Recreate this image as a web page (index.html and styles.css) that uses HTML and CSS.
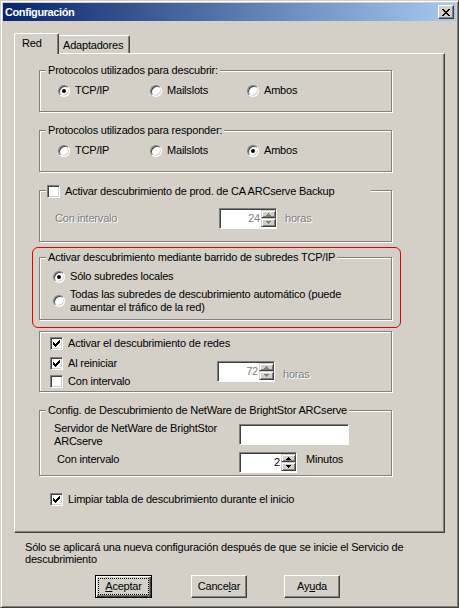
FILE: index.html
```html
<!DOCTYPE html>
<html lang="es">
<head>
    <meta charset="UTF-8">
    <title>Configuración</title>
    <link rel="stylesheet" href="styles.css">
</head>
<body>
    <div class="window">
        <div class="titlebar">
            <span>Configuración</span>
            <div class="close">
                <svg width="8" height="7" viewBox="0 0 8 7" shape-rendering="crispEdges"><path d="M0 0h2v1h-2zM6 0h2v1h-2zM1 1h2v1h-2zM5 1h2v1h-2zM2 2h4v1h-4zM3 3h2v1h-2zM2 4h4v1h-4zM1 5h2v1h-2zM5 5h2v1h-2zM0 6h2v1h-2zM6 6h2v1h-2z"/></svg>
            </div>
        </div>

        <div class="content">
            <div class="tabs">
                <div class="tab active">Red</div>
                <div class="tab">Adaptadores</div>
            </div>

            <div class="panel">
                <!-- descubrir -->
                <div class="group g-radio">
                    <div class="group-title">Protocolos utilizados para descubrir:</div>
                    <div class="radios">
                        <div class="opt"><span class="radio on"></span>TCP/IP</div>
                        <div class="opt"><span class="radio"></span>Mailslots</div>
                        <div class="opt"><span class="radio"></span>Ambos</div>
                    </div>
                </div>

                <!-- responder -->
                <div class="group g-radio gap">
                    <div class="group-title">Protocolos utilizados para responder:</div>
                    <div class="radios">
                        <div class="opt"><span class="radio"></span>TCP/IP</div>
                        <div class="opt"><span class="radio"></span>Mailslots</div>
                        <div class="opt"><span class="radio on"></span>Ambos</div>
                    </div>
                </div>

                <!-- ARCserve Backup -->
                <div class="group g-backup gap">
                    <div class="group-title check-title">
                        <span class="check"></span>Activar descubrimiento de prod. de CA ARCserve Backup
                    </div>
                    <div class="row interval">
                        <span class="lbl dim">Con intervalo</span>
                        <div class="spin">
                            <span class="val dim-val">24</span>
                            <div class="spin-btns">
                                <div class="spin-btn"><svg class="arrow off" width="5" height="3" viewBox="0 0 5 3" shape-rendering="crispEdges"><path d="M2 0h1v1h1v1h1v1h-5v-1h1v-1h1z"/></svg></div>
                                <div class="spin-btn"><svg class="arrow off" width="5" height="3" viewBox="0 0 5 3" shape-rendering="crispEdges"><path d="M0 0h5v1h-1v1h-1v1h-1v-1h-1v-1h-1z"/></svg></div>
                            </div>
                        </div>
                        <span class="unit dim">horas</span>
                    </div>
                </div>

                <!-- barrido -->
                <div class="mark">
                    <div class="group g-sweep">
                        <div class="group-title">Activar descubrimiento mediante barrido de subredes TCP/IP</div>
                        <div class="opt-list">
                            <div class="opt"><span class="radio on"></span>Sólo subredes locales</div>
                            <div class="opt two-lines"><span class="radio"></span><span>Todas las subredes de descubrimiento automático (puede<br>aumentar el tráfico de la red)</span></div>
                        </div>
                    </div>
                </div>

                <!-- redes -->
                <div class="group g-net">
                    <div class="check-row"><span class="check on"><svg width="7" height="7" viewBox="0 0 7 7" shape-rendering="crispEdges"><path d="M6 0h1v1h-1zM5 1h2v1h-2zM0 2h1v1h-1zM4 2h3v1h-3zM0 3h2v1h-2zM3 3h3v1h-3zM0 4h5v1h-5zM1 5h3v1h-3zM2 6h1v1h-1z"/></svg></span>Activar el descubrimiento de redes</div>
                    <div class="split">
                        <div class="split-left">
                            <div class="check-row"><span class="check on"><svg width="7" height="7" viewBox="0 0 7 7" shape-rendering="crispEdges"><path d="M6 0h1v1h-1zM5 1h2v1h-2zM0 2h1v1h-1zM4 2h3v1h-3zM0 3h2v1h-2zM3 3h3v1h-3zM0 4h5v1h-5zM1 5h3v1h-3zM2 6h1v1h-1z"/></svg></span>Al reiniciar</div>
                            <div class="check-row"><span class="check"></span>Con intervalo</div>
                        </div>
                        <div class="spin net-spin">
                            <span class="val dim-val">72</span>
                            <div class="spin-btns">
                                <div class="spin-btn"><svg class="arrow off" width="5" height="3" viewBox="0 0 5 3" shape-rendering="crispEdges"><path d="M2 0h1v1h1v1h1v1h-5v-1h1v-1h1z"/></svg></div>
                                <div class="spin-btn"><svg class="arrow off" width="5" height="3" viewBox="0 0 5 3" shape-rendering="crispEdges"><path d="M0 0h5v1h-1v1h-1v1h-1v-1h-1v-1h-1z"/></svg></div>
                            </div>
                        </div>
                        <span class="unit net-unit dim">horas</span>
                    </div>
                </div>

                <!-- NetWare -->
                <div class="group g-netware gap">
                    <div class="group-title">Config. de Descubrimiento de NetWare de BrightStor ARCserve</div>
                    <div class="nw-row nw-server">
                        <span class="nw-lbl">Servidor de NetWare de BrightStor<br>ARCserve</span>
                        <div class="edit"></div>
                    </div>
                    <div class="nw-row nw-interval">
                        <span class="nw-lbl2">Con intervalo</span>
                        <div class="spin">
                            <span class="val">2</span>
                            <div class="spin-btns">
                                <div class="spin-btn"><svg class="arrow" width="5" height="3" viewBox="0 0 5 3" shape-rendering="crispEdges"><path d="M2 0h1v1h1v1h1v1h-5v-1h1v-1h1z"/></svg></div>
                                <div class="spin-btn"><svg class="arrow" width="5" height="3" viewBox="0 0 5 3" shape-rendering="crispEdges"><path d="M0 0h5v1h-1v1h-1v1h-1v-1h-1v-1h-1z"/></svg></div>
                            </div>
                        </div>
                        <span class="nw-unit">Minutos</span>
                    </div>
                </div>

                <div class="check-row clean"><span class="check on"><svg width="7" height="7" viewBox="0 0 7 7" shape-rendering="crispEdges"><path d="M6 0h1v1h-1zM5 1h2v1h-2zM0 2h1v1h-1zM4 2h3v1h-3zM0 3h2v1h-2zM3 3h3v1h-3zM0 4h5v1h-5zM1 5h3v1h-3zM2 6h1v1h-1z"/></svg></span>Limpiar tabla de descubrimiento durante el inicio</div>
            </div>

            <p class="note">Sólo se aplicará una nueva configuración después de que se inicie el Servicio de<br>descubrimiento</p>

            <div class="buttons">
                <div class="btn default"><span class="focus"><u>A</u>ceptar</span></div>
                <div class="btn cancel">Cance<u>l</u>ar</div>
                <div class="btn help">Ay<u>u</u>da</div>
            </div>
        </div>
    </div>
</body>
</html>
```

FILE: styles.css
```css
* { margin: 0; padding: 0; box-sizing: border-box; }
body {
    background: #d4d0c8;
    font-family: "Liberation Sans", Arial, sans-serif;
    font-size: 11px;
    line-height: 13px;
    letter-spacing: -0.2px;
    color: #000;
}
.window {
    width: 459px;
    height: 608px;
    padding: 2px;
    border: 1px solid;
    border-color: #d4d0c8 #404040 #404040 #d4d0c8;
    box-shadow: inset 1px 1px #fff, inset -1px -1px #808080;
}
.titlebar {
    height: 18px;
    display: flex;
    align-items: center;
    justify-content: space-between;
    padding-left: 2px;
    background: linear-gradient(to right, #0a246a, #a6caf0);
    color: #fff;
    font-weight: bold;
    letter-spacing: -0.4px;
}
.close {
    width: 16px;
    height: 14px;
    margin-right: 2px;
    display: flex;
    align-items: center;
    justify-content: center;
    background: #d4d0c8;
    border: 1px solid;
    border-color: #fff #404040 #404040 #fff;
    box-shadow: inset -1px -1px #808080;
}
.content { padding: 12px 10px 0 11px; }

/* tabs */
.tabs {
    display: flex;
    align-items: flex-end;
    height: 20px;
}
.tab {
    width: 71px;
    height: 18px;
    padding: 3px 0 0 4px;
    border-top: 1px solid #fff;
    border-right: 1px solid #404040;
    border-top-right-radius: 2px;
    box-shadow: inset -1px 0 #808080;
}
.tab.active {
    width: 45px;
    height: 21px;
    margin-bottom: -1px;
    padding-left: 7px;
    border-left: 1px solid #fff;
    border-top-left-radius: 2px;
    background: #d4d0c8;
    position: relative;
    z-index: 1;
}
.panel {
    width: 431px;
    height: 480px;
    padding: 16px 0 0 24px;
    border: 1px solid;
    border-color: #fff #404040 #404040 #fff;
    box-shadow: inset -1px -1px #808080;
}

/* group boxes */
.group {
    width: 353px;
    border: 1px solid #808080;
    box-shadow: inset 1px 1px #fff, 1px 1px #fff;
}
.group.gap { margin-top: 18px; }
.group-title {
    width: fit-content;
    margin: -7px 0 0 6px;
    padding: 0 2px;
    background: #d4d0c8;
}
.check-title {
    width: 325px;
    margin-top: -6px;
    padding: 0 0 0 1px;
    display: flex;
    align-items: center;
    gap: 5px;
}
.g-radio { height: 42px; }
.radios {
    display: grid;
    grid-template-columns: 92px 97px auto;
    margin-top: 7px;
    padding-left: 18px;
}
.opt {
    display: flex;
    align-items: center;
    gap: 5px;
}
.radio {
    width: 12px;
    height: 12px;
    flex: none;
    display: flex;
    align-items: center;
    justify-content: center;
    border-radius: 50%;
    border: 1px solid;
    border-color: #808080 #fff #fff #808080;
    box-shadow: inset 1px 1px #404040, inset -1px -1px #d4d0c8;
    background: #fff;
}
.radio.on::after {
    content: "";
    width: 4px;
    height: 4px;
    border-radius: 50%;
    background: #000;
}
.check {
    width: 13px;
    height: 13px;
    flex: none;
    display: flex;
    align-items: center;
    justify-content: center;
    border: 1px solid;
    border-color: #808080 #fff #fff #808080;
    box-shadow: inset 1px 1px #404040, inset -1px -1px #d4d0c8;
    background: #fff;
}
.check-row {
    height: 13px;
    display: flex;
    align-items: center;
    gap: 5px;
}
.dim { color: #808080; text-shadow: 1px 1px #fff; }
.dim-val { color: #808080; }

/* spin boxes */
.row { display: flex; align-items: center; }
.spin {
    width: 58px;
    height: 21px;
    flex: none;
    display: flex;
    padding: 1px 0 1px 1px;
    border: 1px solid;
    border-color: #808080 #fff #fff #808080;
    box-shadow: inset 1px 1px #404040;
    background: #fff;
}
.spin .val {
    flex: 1;
    text-align: right;
    line-height: 17px;
    padding-right: 1px;
}
.spin-btns {
    width: 15px;
    display: flex;
    flex-direction: column;
}
.spin-btn {
    flex: 1;
    display: flex;
    align-items: center;
    justify-content: center;
    background: #d4d0c8;
    border: 1px solid;
    border-color: #d4d0c8 #404040 #404040 #d4d0c8;
    box-shadow: inset 1px 1px #fff, inset -1px -1px #808080;
}
.spin-btn:first-child { flex: none; height: 8px; }
.arrow { fill: #000; }
.arrow.off { fill: #808080; }
.edit {
    width: 110px;
    height: 21px;
    border: 1px solid;
    border-color: #808080 #fff #fff #808080;
    box-shadow: inset 1px 1px #404040;
    background: #fff;
}

.g-backup { height: 52px; }
.interval { margin-top: 10px; padding-left: 15px; }
.interval .lbl { width: 164px; }
.unit { margin-left: 8px; }

/* red mark round the sweep group */
.mark {
    width: 369px;
    margin: 5px 0 0 -7px;
    padding: 9px 8px 7px 6px;
    border: 1px solid #e60000;
    border-radius: 6px;
}
.g-sweep { height: 63px; }
.opt-list { padding-left: 13px; }
.opt-list .opt:first-child { margin-top: 6px; }
.opt-list .two-lines { margin-top: 5px; }

.g-net {
    height: 61px;
    margin-top: 3px;
    padding: 5px 0 0 10px;
}
.split { display: flex; margin-top: 7px; }
.split-left {
    width: 167px;
    display: flex;
    flex-direction: column;
    gap: 5px;
}
.net-spin { margin-top: 4px; }
.net-unit { margin-top: 11px; }

.g-netware { height: 66px; }
.nw-row {
    display: flex;
    align-items: flex-start;
    padding-left: 14px;
}
.nw-server { margin-top: 7px; }
.nw-lbl { width: 185px; margin-top: -2px; }
.nw-interval { margin-top: 4px; }
.nw-lbl2 { width: 182px; margin: 1px 0 0 3px; }
.nw-unit { margin: 1px 0 0 9px; }

.clean { margin: 17px 0 0 11px; }

.note {
    margin: 8px 0 0 11px;
    line-height: 12px;
}
.buttons {
    display: flex;
    margin: 10px 0 0 81px;
}
.btn {
    width: 56px;
    height: 23px;
    display: flex;
    align-items: center;
    justify-content: center;
    border: 1px solid;
    border-color: #fff #404040 #404040 #fff;
    box-shadow: inset -1px -1px #808080;
}
.btn.default {
    width: 57px;
    padding: 2px;
    border-color: #000;
    box-shadow: inset 1px 1px #fff, inset -1px -1px #404040, inset -2px -2px #808080;
}
.focus {
    width: 100%;
    height: 100%;
    display: flex;
    align-items: center;
    justify-content: center;
    border: 1px dotted #000;
}
.cancel { margin-left: 39px; }
.help { margin-left: 37px; }
```
